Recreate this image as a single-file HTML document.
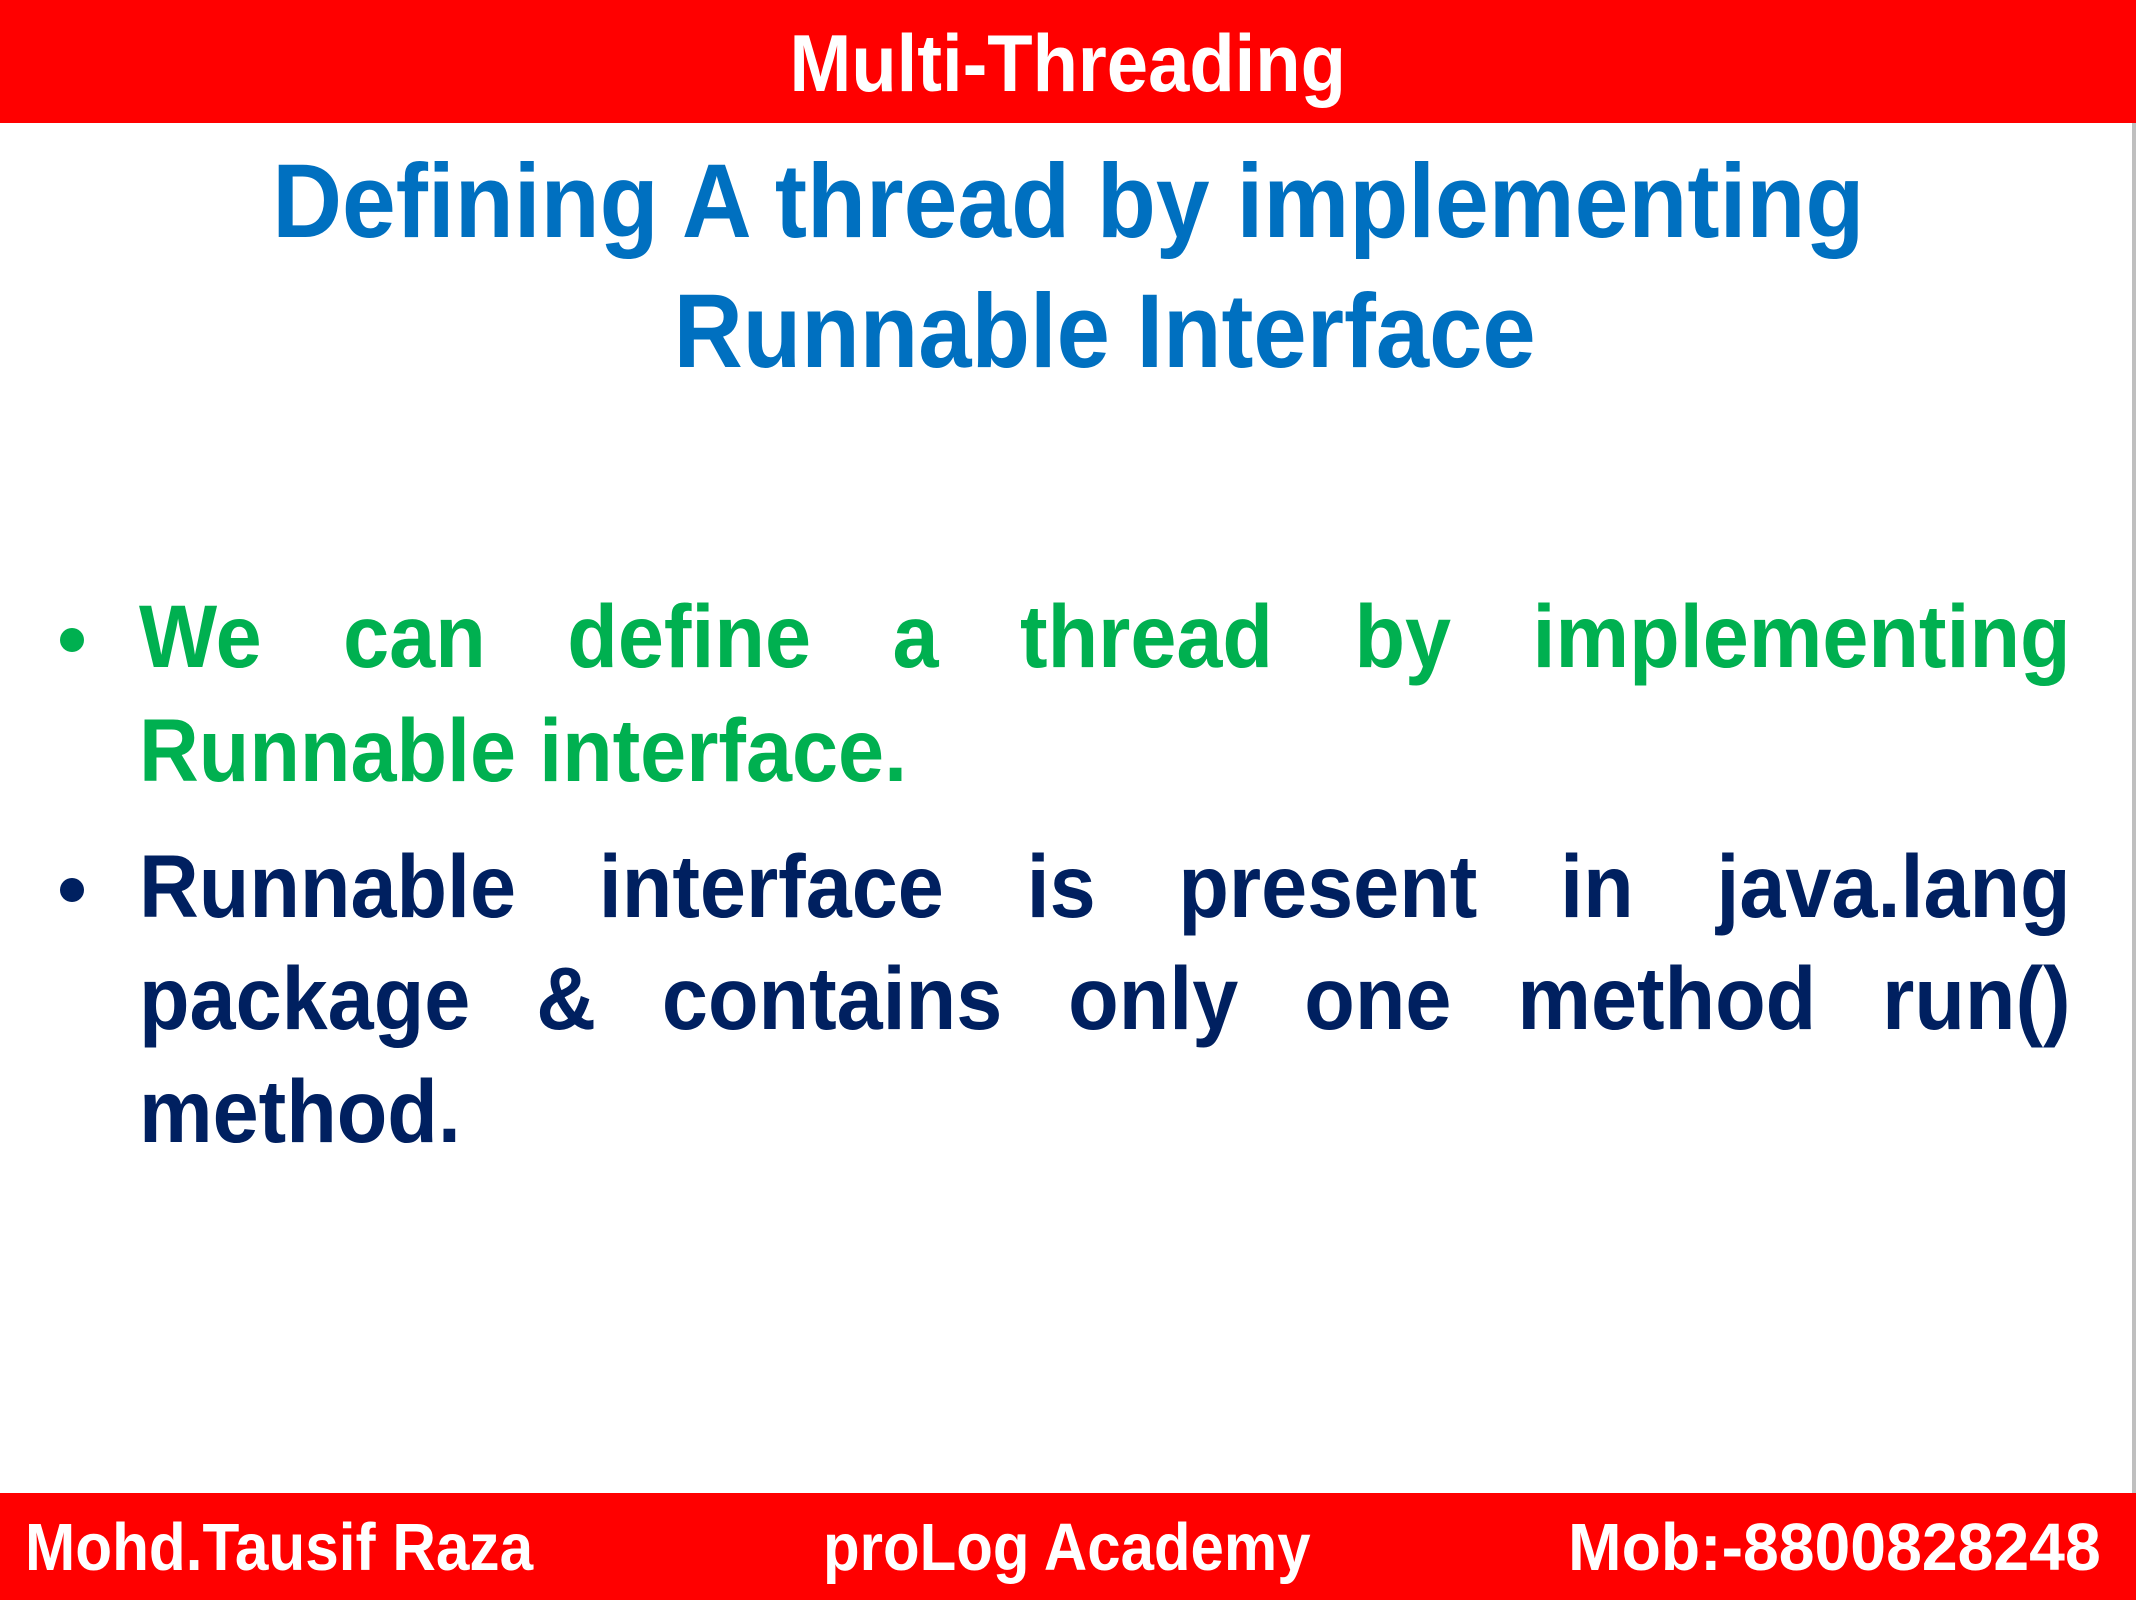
<!DOCTYPE html>
<html><head><meta charset="utf-8"><style>
html,body{margin:0;padding:0;}
body{width:2136px;height:1600px;position:relative;overflow:hidden;background:#fff;font-family:"Liberation Sans",sans-serif;font-weight:bold;}
.bar{position:absolute;left:0;width:2136px;background:#ff0000;}
.c{position:absolute;left:0;width:2136px;text-align:center;line-height:1;white-space:nowrap;}
.c span{display:inline-block;}
.ln{position:absolute;left:139px;width:2077px;transform:scaleX(0.93);transform-origin:0 0;line-height:1;font-size:89px;white-space:nowrap;text-align:justify;text-align-last:justify;}
.ln.l{text-align-last:left;}
.g{color:#00b050}.b{color:#002060}
.dot{position:absolute;left:60px;width:24px;height:24px;border-radius:50%;}
.f{position:absolute;top:1514px;font-size:67px;line-height:1;color:#fff;white-space:nowrap;transform-origin:0 0;}
</style></head><body>
<div class="bar" style="top:0;height:123px"></div>
<div style="position:absolute;right:0;top:123px;width:4px;height:1370px;background:#bfbfbf"></div>
<div class="c" style="top:24px;font-size:81px;color:#fff"><span style="transform:scaleX(0.916)">Multi-Threading</span></div>
<div class="c" style="top:149px;font-size:105px;color:#0070c0"><span style="transform:scaleX(0.92)">Defining A thread by implementing</span></div>
<div class="c" style="top:279px;font-size:105px;color:#0070c0"><span style="transform:translateX(37px) scaleX(0.912)">Runnable Interface</span></div>

<div class="dot" style="top:628px;background:#00b050"></div>
<div class="ln g" style="top:592px">We can define a thread by implementing</div>
<div class="ln g l" style="top:706px">Runnable interface.</div>
<div class="dot" style="top:878px;background:#002060"></div>
<div class="ln b" style="top:842px">Runnable interface is present in java.lang</div>
<div class="ln b" style="top:954px">package &amp; contains only one method run()</div>
<div class="ln b l" style="top:1067px">method.</div>

<div class="bar" style="top:1493px;height:107px"></div>
<div class="f" style="left:25px;transform:scaleX(0.90)">Mohd.Tausif Raza</div>
<div class="f" style="left:823px;transform:scaleX(0.895)">proLog Academy</div>
<div class="f" style="left:1568px;transform:scaleX(0.96)">Mob:-8800828248</div>
</body></html>
